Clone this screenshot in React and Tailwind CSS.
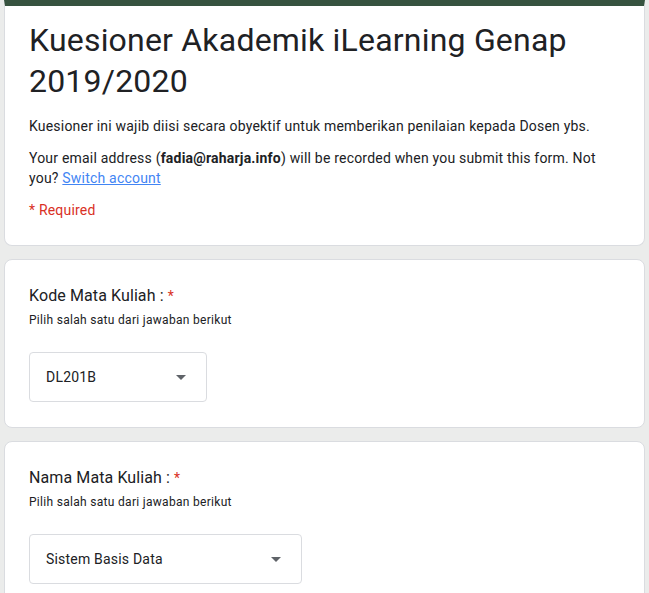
import React from "react";

const Caret = () => (
  <svg width="10" height="5" viewBox="0 0 10 5" className="shrink-0">
    <path d="M0 0 L10 0 L5 5 Z" fill="#5f6368" />
  </svg>
);

const QuestionCard = ({ title, value, width }) => (
  <div className="bg-white border border-[#dadce0] rounded-lg px-6 pt-6 pb-[25px]">
    <div className="text-[16px] leading-6 text-[#202124] font-['Roboto',sans-serif] tracking-[0.1px]">
      {title} <span className="text-[#d93025] text-[14px] align-top">*</span>
    </div>
    <div className="mt-1 text-[12px] leading-4 text-[#202124] tracking-[0.3px] font-['Roboto',sans-serif]">
      Pilih salah satu dari jawaban berikut
    </div>
    <div
      className={`mt-6 h-[50px] border border-[#dadce0] rounded flex items-center justify-between pl-4 pr-5 ${width}`}
    >
      <span className="text-[14px] tracking-[0.2px] text-[#202124] font-['Roboto',sans-serif]">{value}</span>
      <Caret />
    </div>
  </div>
);

export default function App() {
  return (
    <div className="min-h-[593px] bg-[#ebeceb] px-1 font-['Roboto',sans-serif]">
      <div className="flex flex-col gap-[13px]">
        <div className="bg-white border-t-[6px] border-t-[#37533f] rounded-b-lg border-x border-b border-[#dadce0] px-6 pt-[14px] pb-[25px]">
          <h1 className="text-[32px] leading-[41px] tracking-[0.2px] text-[#202124] font-['Roboto',sans-serif] font-normal">
            Kuesioner Akademik iLearning Genap 2019/2020
          </h1>
          <p className="mt-[14px] text-[14px] leading-5 tracking-[0.2px] text-[#202124]">
            Kuesioner ini wajib diisi secara obyektif untuk memberikan penilaian kepada Dosen ybs.
          </p>
          <p className="mt-3 text-[14px] leading-5 tracking-[0.2px] text-[#202124]">
            Your email address (<span className="font-bold">fadia@raharja.info</span>) will be recorded
            when you submit this form. Not you?{" "}
            <a href="#" className="text-[#4285f4] underline">
              Switch account
            </a>
          </p>
          <p className="mt-3 text-[14px] leading-5 tracking-[0.2px] text-[#d93025]">* Required</p>
        </div>
        <QuestionCard title="Kode Mata Kuliah :" value="DL201B" width="w-[178px]" />
        <QuestionCard title="Nama Mata Kuliah :" value="Sistem Basis Data" width="w-[273px]" />
      </div>
    </div>
  );
}
